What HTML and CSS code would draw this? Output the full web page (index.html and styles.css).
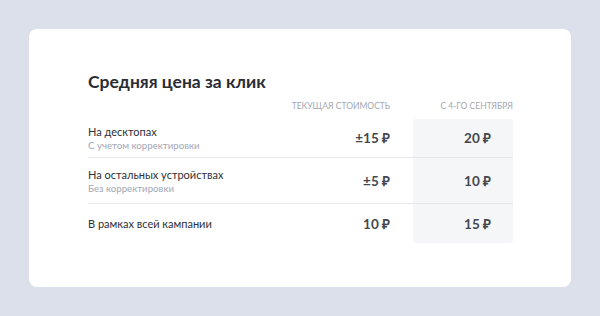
FILE: index.html
```html
<!DOCTYPE html>
<html lang="ru">
<head>
<meta charset="utf-8">
<link rel="stylesheet" href="styles.css">
</head>
<body>
<div class="card">
  <h1 class="title">Средняя цена за клик</h1>
  <div class="table">
    <div class="shade"></div>
    <div class="head"></div>
    <div class="head num">Текущая стоимость</div>
    <div class="head num newcol">С 4-го сентября</div>

    <div class="cell label r1"><div class="name">На десктопах</div><div class="sub">С учетом корректировки</div></div>
    <div class="cell num val r1">±15 ₽</div>
    <div class="cell num val newcol r1">20 ₽</div>

    <div class="cell label r2"><div class="name">На остальных устройствах</div><div class="sub">Без корректировки</div></div>
    <div class="cell num val r2">±5 ₽</div>
    <div class="cell num val newcol r2">10 ₽</div>

    <div class="cell label r3 last"><div class="name">В рамках всей кампании</div></div>
    <div class="cell num val r3 last">10 ₽</div>
    <div class="cell num val newcol r3 last">15 ₽</div>
  </div>
</div>
</body>
</html>
```
FILE: styles.css
```css
html, body {
  margin: 0;
  padding: 0;
}
body {
  width: 600px;
  height: 316px;
  background: #dbe0ea;
  font-family: "Lato", "Open Sans", sans-serif;
  color: #2b2e35;
  padding: 29px;
  box-sizing: border-box;
}
.card {
  background: #ffffff;
  border-radius: 8px;
  height: 258px;
  box-sizing: border-box;
  padding: 41px 58px 0 59px;
}
.title {
  margin: 0;
  font-size: 17.5px;
  font-weight: 700;
  line-height: 24px;
  color: #2a2c33;
}
.table {
  display: grid;
  grid-template-columns: 1fr auto 100px;
  grid-template-rows: 19px 39px 46px 39px;
  margin-top: 6px;
}
.shade {
  grid-column: 3;
  grid-row: 2 / 5;
  background: #f5f6f8;
  border-radius: 3px;
}
.head {
  grid-row: 1;
  font-size: 8.5px;
  text-transform: uppercase;
  color: #a4a8b1;
  line-height: 11px;
  padding-top: 1px;
}
.head:nth-child(2) { grid-column: 1; }
.head:nth-child(3) { grid-column: 2; }
.head:nth-child(4) { grid-column: 3; }
.num {
  text-align: right;
  padding-right: 23px;
}
.head.newcol {
  padding-right: 0;
}
.newcol {
  grid-column: 3;
  padding-right: 22px;
}
.cell {
  border-bottom: 1px solid #e6e8ec;
  display: flex;
  flex-direction: column;
  justify-content: center;
}
.cell.last {
  border-bottom: none;
}
.r1 { grid-row: 2; }
.r2 { grid-row: 3; }
.r3 { grid-row: 4; }
.label { grid-column: 1; }
.val {
  font-size: 13.5px;
  font-weight: 700;
  color: #45484f;
}
.val:not(.newcol) { grid-column: 2; }
.name {
  font-size: 11px;
  line-height: 14px;
  color: #2e3036;
}
.sub {
  font-size: 9.7px;
  line-height: 12px;
  color: #a2a8b6;
}
```
